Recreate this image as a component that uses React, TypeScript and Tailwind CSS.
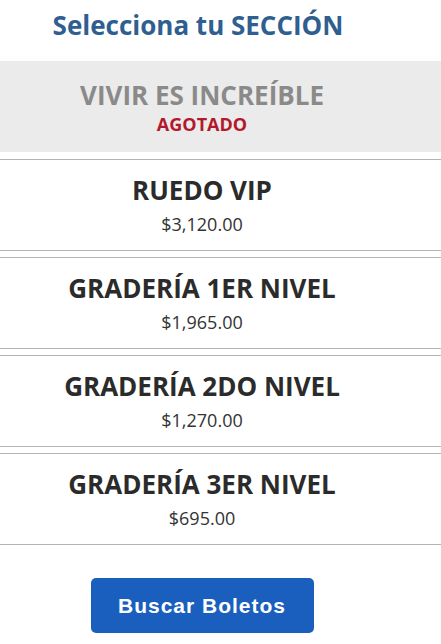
import React from "react";

const secciones = [
  { nombre: "RUEDO VIP", precio: "$3,120.00" },
  { nombre: "GRADERÍA 1ER NIVEL", precio: "$1,965.00" },
  { nombre: "GRADERÍA 2DO NIVEL", precio: "$1,270.00" },
  { nombre: "GRADERÍA 3ER NIVEL", precio: "$695.00" },
];

export default function App() {
  return (
    <main className="w-[441px] h-[644px] bg-white overflow-hidden font-['Open_Sans',sans-serif]">
      <h1 className="w-[396px] pt-[6px] h-[61px] text-center text-[26px] font-bold text-[#2f5f90]">
        Selecciona tu SECCIÓN
      </h1>

      <div className="h-[91px] bg-[#ebebeb] flex flex-col items-center justify-center pr-[37px]">
        <p className="text-[26px] font-bold leading-[34px] text-[#8a8a8a]">VIVIR ES INCREÍBLE</p>
        <p className="text-[18px] font-bold leading-[24px] text-[#b3182b]">AGOTADO</p>
      </div>

      <div className="mt-[7px] flex flex-col gap-[6px]">
        {secciones.map((s) => (
          <div
            key={s.nombre}
            className="h-[92px] border-y border-[#b5b5b5] flex flex-col items-center justify-center pr-[37px]"
          >
            <p className="text-[26px] font-bold leading-[34px] text-[#2b2b2b]">{s.nombre}</p>
            <p className="mt-[3px] text-[18px] leading-[28px] text-[#333333]">{s.precio}</p>
          </div>
        ))}
      </div>

      <div className="flex justify-center pr-[37px] pt-[33px]">
        <button className="w-[223px] h-[55px] rounded-[5px] bg-[#1a5fbe] text-white text-[21px] tracking-[1px] font-bold font-['Liberation_Sans',Arial,sans-serif]">
          Buscar Boletos
        </button>
      </div>
    </main>
  );
}
